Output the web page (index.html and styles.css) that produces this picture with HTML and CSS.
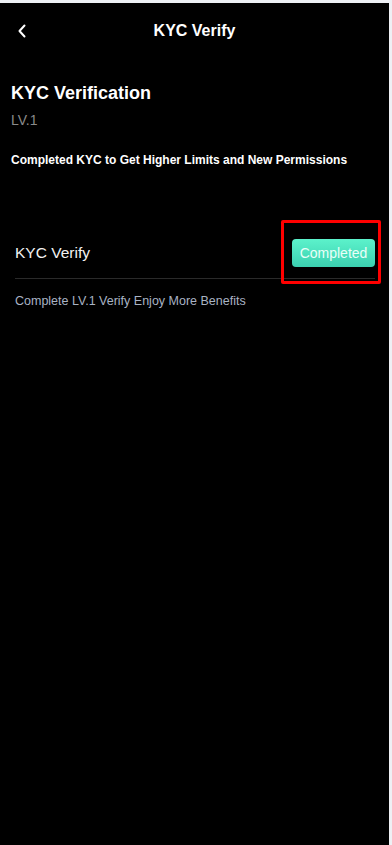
FILE: index.html
```html
<!DOCTYPE html>
<html lang="en">
<head>
  <meta charset="UTF-8">
  <title>KYC Verify</title>
  <link rel="stylesheet" href="styles.css">
</head>
<body>
  <div class="page">
    <div class="header">
      <span class="back">
        <svg width="10" height="14" viewBox="0 0 10 14">
          <path d="M7.5 1.5 L2.5 7 L7.5 12.5" fill="none" stroke="#fff" stroke-width="2" stroke-linecap="round" stroke-linejoin="round"/>
        </svg>
      </span>
      <h1 class="title">KYC Verify</h1>
    </div>

    <div class="intro">
      <h2>KYC Verification</h2>
      <div class="level">LV.1</div>
      <p class="desc">Completed KYC to Get Higher Limits and New Permissions</p>
    </div>

    <div class="kyc-row">
      <span class="kyc-label">KYC Verify</span>
      <span class="status-btn">Completed</span>
      <div class="highlight"></div>
    </div>
    <p class="hint">Complete LV.1 Verify Enjoy More Benefits</p>
  </div>
</body>
</html>
```

FILE: styles.css
```css
body {
  margin: 0;
  background-color: #eef0f4;
  font-family: "Liberation Sans", Arial, sans-serif;
}
.page {
  background: #000;
  color: #fff;
  margin: 3px 3px 0 0;
  min-height: 842px;
}
.header {
  position: relative;
  height: 56px;
  display: flex;
  align-items: center;
  justify-content: center;
}
.back {
  position: absolute;
  left: 17px;
  top: 21px;
  display: flex;
}
.title {
  margin: 0;
  font-size: 16px;
  font-weight: bold;
}
.intro {
  padding: 22px 11px 0;
}
.intro h2 {
  margin: 0;
  font-size: 18px;
  line-height: 24px;
  font-weight: bold;
}
.level {
  margin-top: 7px;
  font-size: 14px;
  color: #8a8a8a;
}
.desc {
  margin: 25px 0 0;
  font-size: 12px;
  font-weight: bold;
}
.kyc-row {
  position: relative;
  margin: 72px 14px 0 15px;
  height: 39px;
  border-bottom: 1px solid #2a2a2a;
  display: flex;
  align-items: flex-start;
  justify-content: space-between;
}
.kyc-label {
  font-size: 15.5px;
  line-height: 28px;
  color: #f2f2f2;
}
.status-btn {
  width: 83px;
  height: 28px;
  line-height: 28px;
  text-align: center;
  font-size: 14px;
  color: #e8fff8;
  border-radius: 4px;
  background: linear-gradient(#5cf2cb, #3bd0b0);
}
.highlight {
  position: absolute;
  right: -6px;
  top: -19px;
  width: 94px;
  height: 58px;
  border: 3px solid #ff0000;
  border-radius: 2px;
}
.hint {
  margin: 15px 15px 0;
  font-size: 12.5px;
  color: #a9b3c4;
}
```
